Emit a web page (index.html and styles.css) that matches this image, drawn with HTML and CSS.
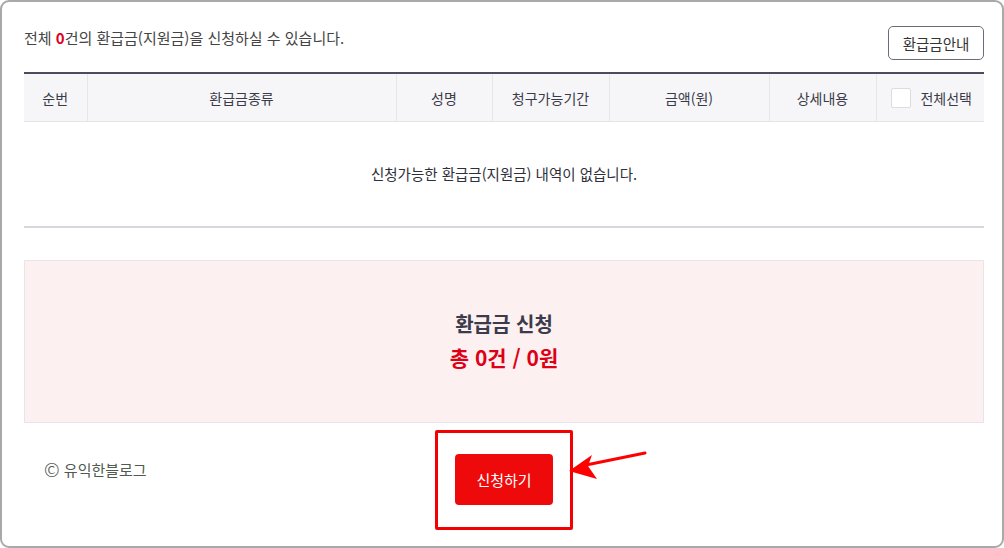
FILE: index.html
```html
<!DOCTYPE html>
<html lang="ko">
<head>
  <meta charset="utf-8">
  <title>환급금 신청</title>
  <link rel="stylesheet" href="styles.css">
</head>
<body>
  <div class="frame">
    <div class="top">
      <p class="summary">전체 <em>0</em>건의 환급금(지원금)을 신청하실 수 있습니다.</p>
      <button class="guide-btn">환급금안내</button>
    </div>

    <table class="refund-table">
      <colgroup>
        <col style="width:63px"><col style="width:309px"><col style="width:96px">
        <col style="width:117px"><col style="width:160px"><col style="width:107px"><col style="width:108px">
      </colgroup>
      <thead>
        <tr>
          <th>순번</th>
          <th>환급금종류</th>
          <th>성명</th>
          <th>청구가능기간</th>
          <th>금액(원)</th>
          <th>상세내용</th>
          <th><label class="check-all"><span class="box"></span>전체선택</label></th>
        </tr>
      </thead>
      <tbody>
        <tr>
          <td class="empty" colspan="7">신청가능한 환급금(지원금) 내역이 없습니다.</td>
        </tr>
      </tbody>
    </table>

    <div class="apply-box">
      <h2>환급금 신청</h2>
      <p class="total">총 0건 / 0원</p>
    </div>

    <div class="bottom">
      <span class="copy"><span class="mark">©</span> 유익한블로그</span>
      <div class="highlight">
        <button class="apply-btn">신청하기</button>
      </div>
      <span></span>
    </div>

    <!-- annotation arrow -->
    <svg class="arrow" width="1004" height="548" viewBox="0 0 1004 548">
      <line x1="586" y1="465" x2="645" y2="453" stroke="#f00" stroke-width="3" stroke-linecap="round"/>
      <polygon points="569,471 592,455 588,466 597,479" fill="#f00"/>
    </svg>
  </div>
</body>
</html>
```

FILE: styles.css
```css
body {
  margin: 0;
  font-family: "Noto Sans CJK KR", "Noto Sans", sans-serif;
  color: #3a3a48;
  background: #fff;
}

.frame {
  position: relative;
  box-sizing: border-box;
  width: 1004px;
  height: 548px;
  border: 2px solid #a9a9a9;
  border-radius: 9px;
  padding: 25px 18px 0 22px;
}

.top {
  display: flex;
  justify-content: space-between;
  height: 33px;
  margin-bottom: 12px;
}

.summary {
  margin: 0;
  font-size: 15px;
  line-height: 22px;
  color: #444;
}

.summary em {
  font-style: normal;
  font-weight: bold;
  color: #e0001b;
}

.guide-btn {
  width: 96px;
  height: 34px;
  margin-top: -1px;
  border: 1px solid #6c6c78;
  border-radius: 5px;
  background: #fff;
  font-family: inherit;
  font-size: 14.5px;
  color: #333;
  padding: 0;
}

.refund-table {
  width: 960px;
  border-collapse: collapse;
  table-layout: fixed;
  font-size: 14px;
}

.refund-table th {
  height: 47px;
  padding: 0;
  background: #f6f6f8;
  border-top: 2px solid #4b4b60;
  border-bottom: 1px solid #e3e3e8;
  border-left: 1px solid #e6e6ea;
  font-weight: normal;
  color: #3a3a48;
}

.refund-table th:first-child {
  border-left: none;
}

.check-all {
  display: flex;
  align-items: center;
  justify-content: center;
  gap: 9px;
  padding-left: 3px;
}

.check-all .box {
  width: 20px;
  height: 20px;
  box-sizing: border-box;
  border: 1px solid #dcdce0;
  border-radius: 2px;
  background: #fff;
}

.empty {
  height: 103px;
  text-align: center;
  border-bottom: 2px solid #d6d7dd;
  color: #2f2f3a;
  font-size: 14.5px;
  padding: 0 0 1px;
}

.apply-box {
  box-sizing: border-box;
  width: 960px;
  height: 163px;
  margin-top: 32px;
  padding-top: 48px;
  background: #fdf0f0;
  border: 1px solid #e7e5ea;
  text-align: center;
}

.apply-box h2 {
  margin: 0;
  font-size: 20px;
  line-height: 30px;
  font-weight: bold;
  color: #3b3b4c;
}

.apply-box .total {
  margin: 3px 0 0;
  font-size: 21px;
  line-height: 30px;
  font-weight: bold;
  color: #de0016;
}

.bottom {
  display: grid;
  grid-template-columns: 1fr auto 1fr;
  width: 960px;
  margin-top: 7px;
}

.copy {
  padding: 25px 0 0 20px;
  font-size: 15px;
  color: #4f5a50;
}

.copy .mark {
  font-size: 19px;
  font-weight: 300;
  vertical-align: -1px;
}

.highlight {
  box-sizing: border-box;
  width: 138px;
  height: 100px;
  border: 3px solid #f40000;
  border-radius: 2px;
  display: flex;
  align-items: center;
  justify-content: center;
}

.apply-btn {
  width: 98px;
  height: 51px;
  margin-top: -1px;
  border: none;
  border-radius: 4px;
  background: #ee0a0a;
  color: #fff;
  font-family: inherit;
  font-size: 15px;
  padding: 0;
}

.arrow {
  position: absolute;
  left: -2px;
  top: -2px;
  pointer-events: none;
}
```
